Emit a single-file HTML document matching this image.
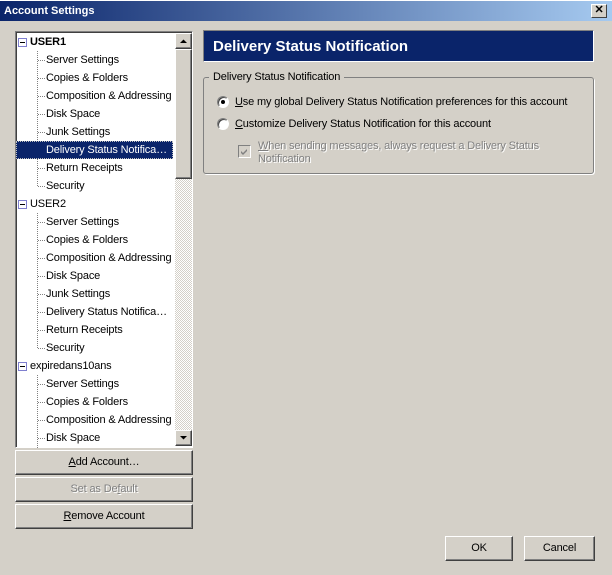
<!DOCTYPE html>
<html><head><style>
*{margin:0;padding:0;box-sizing:border-box}
body{width:612px;height:575px;background:#d4d0c8;font-family:"Liberation Sans",sans-serif;font-size:11px;color:#000;position:relative;overflow:hidden;letter-spacing:-0.15px}
.a{position:absolute}
.title{left:0;top:0;width:612px;height:21px;background:linear-gradient(90deg,#0a246a,#a6caf0);color:#fff;font-weight:bold;font-size:11px;line-height:21px;padding-left:4px;border-top:1px solid #fff;letter-spacing:0}
.close{left:591px;top:4px;width:16px;height:14px;background:#d4d0c8;border:1px solid;border-color:#fff #404040 #404040 #fff;text-align:center;line-height:11px;font-weight:bold;font-size:11px}
.tree{left:15px;top:31px;width:178px;height:417px;border:1px solid;border-color:#808080 #fff #fff #808080;background:#fff;box-shadow:inset 1px 1px 0 #404040}
.in{position:absolute;left:0;top:1px;width:160px;height:414px}
.row{position:absolute;left:2px;height:18px;line-height:18px;white-space:nowrap}
.sel{background:#0a246a;color:#fff;width:157px;outline:1px dotted #c0c0c0;outline-offset:-1px}
.box{position:absolute;width:9px;height:9px;border:1px solid #7f7fcf;background:#fff;top:4px;left:2px}
.box:after{content:"";position:absolute;left:1px;top:3px;width:5px;height:1px;background:#000}
.sb{left:175px;top:33px;width:17px;height:413px;background-color:#eeece8;background-image:repeating-conic-gradient(#fff 0 25%,#d4d0c8 0 50%);background-size:2px 2px}
.btn{background:#d4d0c8;border:1px solid;border-color:#fff #404040 #404040 #fff;box-shadow:inset -1px -1px 0 #808080;text-align:center}
.hdr{left:203px;top:30px;width:391px;height:32px;background:#0a246a;border:1px solid;border-color:#808080 #fff #fff #808080;color:#fff;font-size:15px;font-weight:bold;line-height:31px;padding-left:9px;letter-spacing:0}
.grp{left:203px;top:77px;width:391px;height:97px;border:1px solid #808080;border-radius:3px;box-shadow:1px 1px 0 #fff}
.radio{position:absolute;width:12px;height:12px;border-radius:50%;background:#fff;border:1px solid;border-color:#808080 #fff #fff #808080;box-shadow:inset 1px 1px 0 #404040}
</style></head><body>
<div class="a title">Account Settings</div>
<div class="a close">✕</div>

<div class="a tree"><div class="in">
<svg class="a" style="left:0;top:0" width="160" height="415">
<g stroke="#808080" stroke-dasharray="1,1" fill="none">
<line x1="21.5" y1="18" x2="21.5" y2="153"/>
<line x1="21.5" y1="180" x2="21.5" y2="315"/>
<line x1="21.5" y1="342" x2="21.5" y2="415"/>
</g>
<g stroke="#808080" stroke-dasharray="1,1">
<line x1="22" y1="27.5" x2="30" y2="27.5"/><line x1="22" y1="45.5" x2="30" y2="45.5"/><line x1="22" y1="63.5" x2="30" y2="63.5"/><line x1="22" y1="81.5" x2="30" y2="81.5"/><line x1="22" y1="99.5" x2="30" y2="99.5"/><line x1="22" y1="117.5" x2="30" y2="117.5"/><line x1="22" y1="135.5" x2="30" y2="135.5"/><line x1="22" y1="153.5" x2="30" y2="153.5"/>
<line x1="22" y1="189.5" x2="30" y2="189.5"/><line x1="22" y1="207.5" x2="30" y2="207.5"/><line x1="22" y1="225.5" x2="30" y2="225.5"/><line x1="22" y1="243.5" x2="30" y2="243.5"/><line x1="22" y1="261.5" x2="30" y2="261.5"/><line x1="22" y1="279.5" x2="30" y2="279.5"/><line x1="22" y1="297.5" x2="30" y2="297.5"/><line x1="22" y1="315.5" x2="30" y2="315.5"/>
<line x1="22" y1="351.5" x2="30" y2="351.5"/><line x1="22" y1="369.5" x2="30" y2="369.5"/><line x1="22" y1="387.5" x2="30" y2="387.5"/><line x1="22" y1="405.5" x2="30" y2="405.5"/>
</g></svg>
<div class="row" style="top:0;left:14px;font-weight:bold">USER1</div><div class="box" style="top:5px"></div>
<div class="row" style="top:18px;left:30px">Server Settings</div>
<div class="row" style="top:36px;left:30px">Copies &amp; Folders</div>
<div class="row" style="top:54px;left:30px">Composition &amp; Addressing</div>
<div class="row" style="top:72px;left:30px">Disk Space</div>
<div class="row" style="top:90px;left:30px">Junk Settings</div>
<div class="row sel" style="top:108px;left:0;padding-left:30px">Delivery Status Notifica…</div>
<div class="row" style="top:126px;left:30px">Return Receipts</div>
<div class="row" style="top:144px;left:30px">Security</div>
<div class="row" style="top:162px;left:14px">USER2</div><div class="box" style="top:167px"></div>
<div class="row" style="top:180px;left:30px">Server Settings</div>
<div class="row" style="top:198px;left:30px">Copies &amp; Folders</div>
<div class="row" style="top:216px;left:30px">Composition &amp; Addressing</div>
<div class="row" style="top:234px;left:30px">Disk Space</div>
<div class="row" style="top:252px;left:30px">Junk Settings</div>
<div class="row" style="top:270px;left:30px">Delivery Status Notifica…</div>
<div class="row" style="top:288px;left:30px">Return Receipts</div>
<div class="row" style="top:306px;left:30px">Security</div>
<div class="row" style="top:324px;left:14px">expiredans10ans</div><div class="box" style="top:329px"></div>
<div class="row" style="top:342px;left:30px">Server Settings</div>
<div class="row" style="top:360px;left:30px">Copies &amp; Folders</div>
<div class="row" style="top:378px;left:30px">Composition &amp; Addressing</div>
<div class="row" style="top:396px;left:30px">Disk Space</div>
</div></div>
<div class="a sb"></div>
<div class="a btn" style="left:175px;top:33px;width:17px;height:16px"><svg width="15" height="14"><path d="M4 9h7L7.5 5.5z" fill="#000"/></svg></div>
<div class="a btn" style="left:175px;top:49px;width:17px;height:130px"></div>
<div class="a btn" style="left:175px;top:430px;width:17px;height:16px"><svg width="15" height="14"><path d="M4 5h7L7.5 8.5z" fill="#000"/></svg></div>

<div class="a btn" style="left:15px;top:450px;width:178px;height:25px;line-height:23px"><u>A</u>dd Account…</div>
<div class="a btn" style="left:15px;top:477px;width:178px;height:25px;line-height:23px;color:#808080;text-shadow:1px 1px 0 #fff">Set as De<u>f</u>ault</div>
<div class="a btn" style="left:15px;top:504px;width:178px;height:25px;line-height:23px"><u>R</u>emove Account</div>

<div class="a hdr">Delivery Status Notification</div>
<div class="a grp"></div>
<div class="a" style="left:209px;top:71px;background:#d4d0c8;padding:0 4px">Delivery Status Notification</div>
<div class="radio" style="left:217px;top:96px"><div class="a" style="left:3px;top:3px;width:4px;height:4px;background:#000;border-radius:50%"></div></div>
<div class="a" style="left:235px;top:96px"><u>U</u>se my global Delivery Status Notification preferences for this account</div>
<div class="radio" style="left:217px;top:118px"></div>
<div class="a" style="left:235px;top:118px"><u>C</u>ustomize Delivery Status Notification for this account</div>
<div class="a" style="left:238px;top:145px;width:13px;height:13px;border:1px solid;border-color:#808080 #fff #fff #808080;background:#d4d0c8"><svg width="11" height="11" style="position:absolute;left:0;top:0"><path d="M2 5l2 2 4-4v2l-4 4-2-2z" fill="#808080"/></svg></div>
<div class="a" style="left:258px;top:140px;color:#808080;line-height:13px;text-shadow:1px 1px 0 #fff"><u>W</u>hen sending messages, always request a Delivery Status<br>Notification</div>

<div class="a btn" style="left:445px;top:536px;width:68px;height:25px;line-height:23px">OK</div>
<div class="a btn" style="left:524px;top:536px;width:71px;height:25px;line-height:23px">Cancel</div>
</body></html>
